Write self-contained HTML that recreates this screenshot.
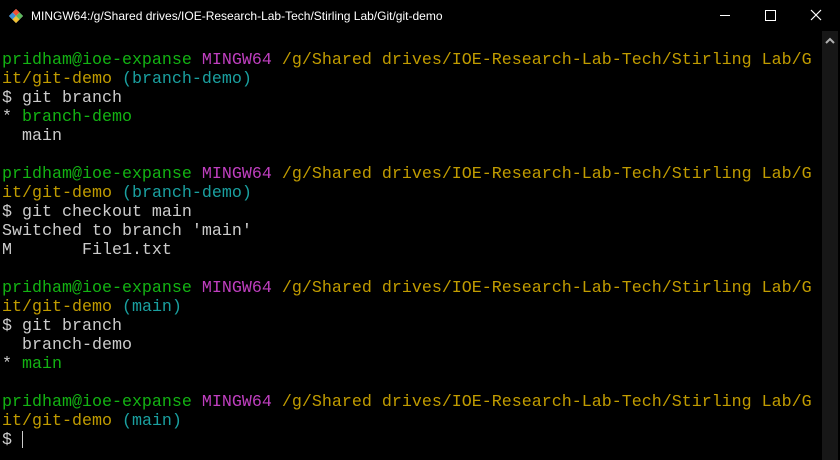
<!DOCTYPE html>
<html><head><style>
html,body{margin:0;padding:0;background:#000;}
body{width:840px;height:460px;position:relative;overflow:hidden;background:#000;}
#title{position:absolute;left:0;top:0;width:840px;height:31px;background:#000;color:#fff;font:12px "Liberation Sans",sans-serif;}
#title .t{position:absolute;left:31px;top:9px;}
#term{position:absolute;left:2px;top:51px;font-family:"Liberation Mono",monospace;font-size:16.67px;line-height:19px;color:#cccccc;white-space:pre;}
.g{color:#13b313}.p{color:#bf3fbf}.y{color:#c19c00}.c{color:#1aa0a0}
#sb{position:absolute;left:822px;top:31px;width:16px;height:429px;background:#171717;}
</style></head><body>
<div id="title">
<svg style="position:absolute;left:8px;top:8px" width="16" height="16" viewBox="0 0 16 16">
<path d="M8 1 L15 8 L8 15 L1 8 Z" fill="#e8e8e8"/>
<path d="M8 1 L11.5 4.5 L8 8 L4.5 4.5Z" fill="#f05033"/>
<path d="M1 8 L4.5 4.5 L8 8 L4.5 11.5Z" fill="#3a8fd8"/>
<path d="M8 8 L11.5 11.5 L8 15 L4.5 11.5Z" fill="#f0c030"/>
<path d="M15 8 L11.5 11.5 L8 8 L11.5 4.5Z" fill="#5cb85c"/>
</svg>
<span class="t">MINGW64:/g/Shared drives/IOE-Research-Lab-Tech/Stirling Lab/Git/git-demo</span>
<div style="position:absolute;left:720px;top:15px;width:10px;height:1px;background:#fff"></div>
<div style="position:absolute;left:765px;top:10px;width:9px;height:9px;border:1px solid #fff"></div>
<svg style="position:absolute;left:810px;top:9px" width="12" height="12"><path d="M1 1L11 11M11 1L1 11" stroke="#fff" stroke-width="1.2"/></svg>
</div>
<div id="sb"><svg style="position:absolute;left:3px;top:6px" width="10" height="8"><path d="M1 6L5 2L9 6" stroke="#b0b0b0" stroke-width="2" fill="none"/></svg></div>
<div id="term"><span class="g">pridham@ioe-expanse</span> <span class="p">MINGW64</span> <span class="y">/g/Shared drives/IOE-Research-Lab-Tech/Stirling Lab/G
it/git-demo</span> <span class="c">(branch-demo)</span>
$ git branch
* <span class="g">branch-demo</span>
  main

<span class="g">pridham@ioe-expanse</span> <span class="p">MINGW64</span> <span class="y">/g/Shared drives/IOE-Research-Lab-Tech/Stirling Lab/G
it/git-demo</span> <span class="c">(branch-demo)</span>
$ git checkout main
Switched to branch 'main'
M       File1.txt

<span class="g">pridham@ioe-expanse</span> <span class="p">MINGW64</span> <span class="y">/g/Shared drives/IOE-Research-Lab-Tech/Stirling Lab/G
it/git-demo</span> <span class="c">(main)</span>
$ git branch
  branch-demo
* <span class="g">main</span>

<span class="g">pridham@ioe-expanse</span> <span class="p">MINGW64</span> <span class="y">/g/Shared drives/IOE-Research-Lab-Tech/Stirling Lab/G
it/git-demo</span> <span class="c">(main)</span>
$ <span style="display:inline-block;width:1px;height:17px;background:#ccc;vertical-align:-4px"></span></div>
</body></html>
